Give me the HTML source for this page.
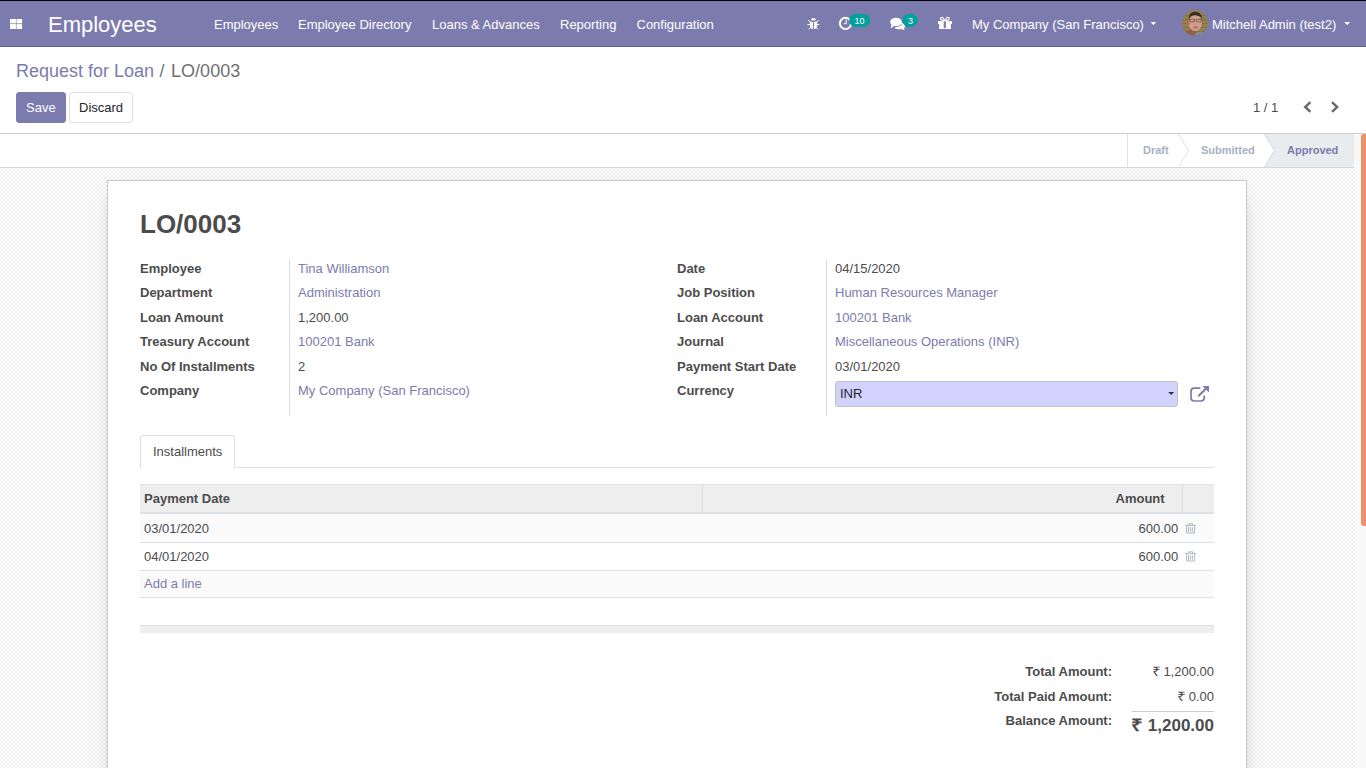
<!DOCTYPE html>
<html><head><meta charset="utf-8">
<style>
*{box-sizing:border-box;margin:0;padding:0}
html,body{width:1366px;height:768px;overflow:hidden;background:#fff}
body{font-family:"Liberation Sans",sans-serif;font-size:13px;line-height:20px;color:#4c4c4c;position:relative}
.a{position:absolute;white-space:nowrap}
a{color:#7c7bad;text-decoration:none}
b{font-weight:bold}
#topline{position:absolute;left:0;top:0;width:1366px;height:1px;background:#000}
#nav{position:absolute;left:0;top:1px;width:1366px;height:46px;background:#7c7bad;border-bottom:1px solid #5f5e97;color:#fff}
#nav .t{position:absolute;white-space:nowrap;line-height:20px;top:14px}
#cp{position:absolute;left:0;top:47px;width:1366px;height:87px;background:#fff;border-bottom:1px solid #ccc}
#bg{position:absolute;left:0;top:134px;width:1354px;height:634px;background:repeating-conic-gradient(#fff 0 25%,#ededed 0 50%) 1px 3px/4px 4px}
#statusbar{position:absolute;left:0;top:134px;width:1354px;height:34px;background:#fff;border-bottom:1px solid #d3d8dd}
#sb-track{position:absolute;left:1354px;top:134px;width:12px;height:634px;background:#f8f8f8}
#sb-thumb{position:absolute;left:1361px;top:134px;width:5px;height:392px;background:#f0906a;border-radius:3px 0 0 3px}
#sheet{position:absolute;left:107px;top:180px;width:1140px;height:620px;background:#fff;border:1px solid #c8c8d3;box-shadow:0 5px 20px -15px #000}
.btn{position:absolute;top:92px;height:31px;border:1px solid transparent;border-radius:3px;line-height:20px;padding:5px 9px 3px;white-space:nowrap}
.sep{position:absolute;width:1px;background:#ddd}
.tr{position:absolute;left:140px;width:1074px}
</style></head>
<body>
<div id="topline"></div>
<div id="nav">
  <svg class="a" style="left:0;top:-1px" width="30" height="46" viewBox="0 0 30 46">
    <rect x="10" y="19" width="5.9" height="4.4" fill="#fff"/><rect x="16.5" y="19" width="5.6" height="4.4" fill="#fff"/>
    <rect x="10" y="24.1" width="5.9" height="4.9" fill="#fff"/><rect x="16.5" y="24.1" width="5.6" height="4.9" fill="#fff"/>
  </svg>
  <div class="t" style="left:48px;top:11px;font-size:22px;line-height:26px">Employees</div>
  <div class="t" style="left:214px">Employees</div>
<svg class="a" style="left:800px;top:-1px" width="380" height="46" viewBox="800 0 380 46">
  <!-- bug -->
  <path d="M810.9,20.2 Q811,17.9 813.4,17.9 Q815.9,17.9 815.9,20.2 Z" fill="#fff"/>
  <path d="M809.9,21.7 H812.9 V29.1 Q809.9,29 809.9,26 Z M813.9,21.7 H817.1 V26 Q817.1,29 813.9,29.1 Z" fill="#fff"/>
  <path d="M808.3,20.1 L810.2,22.3 M818.5,20.1 L816.6,22.3 M807.4,24.6 H810.2 M819.3,24.6 H816.6 M808.6,29.4 L810.3,27.6 M818.2,29.4 L816.5,27.6" stroke="#fff" stroke-width="1" fill="none"/>
  <!-- clock -->
  <circle cx="845.5" cy="23.4" r="5.6" fill="none" stroke="#fff" stroke-width="2"/>
  <path d="M846.2,19.4 V23.7 H843.8" fill="none" stroke="#fff" stroke-width="1"/>
  <rect x="849.2" y="13.8" width="20.8" height="13.2" rx="6.6" fill="#00a09d"/>
  <text x="859.6" y="24" font-family="Liberation Sans" font-size="9" fill="#fff" text-anchor="middle">10</text>
  <!-- chat -->
  <path d="M897.5,22 Q905,22.5 905,26.4 Q905,28 903.6,28.8 Q904.2,29.6 905.4,29.9 Q902.8,30 901.3,29 Q900,29.2 898.6,29.2 Q896.2,29.2 894.8,28.3 Z" fill="#fff"/>
  <path d="M893.8,26.4 Q898.5,27.2 901.6,24.4" fill="none" stroke="#7c7bad" stroke-width="1"/><ellipse cx="896" cy="21.9" rx="5.9" ry="4.1" fill="#fff"/>
  <path d="M891.2,24.2 Q891.5,27 890.6,28.2 Q893,27.6 894.3,25.6 Z" fill="#fff"/>
  <ellipse cx="910.1" cy="20.4" rx="7.9" ry="6.6" fill="#00a09d"/>
  <text x="910.4" y="24" font-family="Liberation Sans" font-size="9" fill="#fff" text-anchor="middle">3</text>
  <!-- gift -->
  <path d="M938,20.9 H951.9 V23.9 H950.9 V28.9 H939.2 V23.9 H938 Z M943.7,21.3 V27.9 H945.9 V21.3 Z" fill="#fff" fill-rule="evenodd"/>
  <path d="M944.4,20.4 Q943.5,17.2 942,17.2 Q940.4,17.3 940.6,18.8 Q941,20.4 944.4,20.4 Z M945.4,20.4 Q946.3,17.2 947.8,17.2 Q949.4,17.3 949.2,18.8 Q948.8,20.4 945.4,20.4 Z" fill="none" stroke="#fff" stroke-width="1.1"/>
  <!-- carets -->
  <polygon points="1150.5,22 1156.3,22 1153.4,25" fill="#fff"/>
</svg>
<svg class="a" style="left:1340px;top:-1px" width="20" height="46" viewBox="1340 0 20 46">
  <polygon points="1344.3,22 1350.1,22 1347.2,25" fill="#fff"/>
</svg>
<svg class="a" style="left:1182px;top:9px" width="26" height="26" viewBox="0 0 26 26">
  <defs><clipPath id="av"><circle cx="13" cy="13" r="12.9"/></clipPath></defs>
  <g clip-path="url(#av)">
    <rect width="26" height="26" fill="#94804e"/>
    <path d="M0,5.5 H26 M0,9.5 H26 M0,13.5 H26 M0,17.5 H26 M0,21.5 H26" stroke="#7e6a42" stroke-width="1" opacity=".7"/>
    <ellipse cx="9" cy="25" rx="8" ry="5" fill="#8c6248"/>
    <ellipse cx="18.5" cy="25.5" rx="6" ry="4" fill="#7c8a94"/>
    <ellipse cx="13.2" cy="13" rx="6.6" ry="8.2" fill="#cf9f8c"/>
    <ellipse cx="6.2" cy="13.2" rx="1.3" ry="2.2" fill="#c06a58"/>
    <path d="M6.6,9 Q6.8,2 13,1.8 Q19.8,1.8 20.2,9.5 Q19.2,5.6 13.4,5.2 Q8.4,5.2 6.6,9 Z" fill="#3a2c24"/>
    <path d="M7.2,9.4 H12.6 V11.8 H7.8 Z M14.2,9.4 H19.6 L19.2,11.8 H14.6 Z" fill="none" stroke="#4a3a34" stroke-width="0.8" opacity=".75"/>
    <ellipse cx="13.6" cy="17.4" rx="2.6" ry="1.1" fill="#b86a6a"/>
  </g>
</svg>

  <div class="t" style="left:298px">Employee Directory</div>
  <div class="t" style="left:432px">Loans &amp; Advances</div>
  <div class="t" style="left:560px">Reporting</div>
  <div class="t" style="left:636.5px">Configuration</div>
  <div class="t" style="left:972px">My Company (San Francisco)</div>
  <div class="t" style="left:1212px">Mitchell Admin (test2)</div>
</div>
<div id="cp">
  <div class="a" style="left:16px;top:12px;font-size:18px;line-height:24px"><a>Request for Loan</a><span style="color:#6c757d;padding:0 6.5px 0 5.5px">/</span><span style="color:#707070">LO/0003</span></div>
</div>
<div class="btn" style="left:16px;width:50px;background:#7c7bad;border-color:#7c7bad;color:#fff">Save</div>
<div class="btn" style="left:69px;width:64px;background:#fff;border-color:#dee2e6;color:#212529">Discard</div>
<div class="a" style="left:1253px;top:98px">1 / 1</div>
<svg class="a" style="left:1298px;top:96px" width="46" height="22" viewBox="0 0 46 22">
  <polyline points="12.4,6.2 7.2,11 12.4,15.8" fill="none" stroke="#6a6a6a" stroke-width="2.4"/>
  <polyline points="34,6.2 39.2,11 34,15.8" fill="none" stroke="#6a6a6a" stroke-width="2.4"/>
</svg>


<div id="bg"></div>
<div id="statusbar"></div>
<svg class="a" style="left:0;top:134px" width="1354" height="33" viewBox="0 0 1354 33">
  <polygon points="1264,0 1354,0 1354,33 1264,33 1274.5,16.5" fill="#e9ecef"/>
  <line x1="1127.5" y1="0" x2="1127.5" y2="33" stroke="#dee2e6" stroke-width="1"/>
  <polyline points="1178.5,0 1188.5,16.5 1178.5,33" fill="none" stroke="#dee2e6" stroke-width="1"/>
  <polyline points="1264.5,0 1274.5,16.5 1264.5,33" fill="none" stroke="#d5d9de" stroke-width="1"/>
</svg>
<div class="a" style="left:1143px;top:140px;font-size:11px;font-weight:bold;color:#a8b0c4">Draft</div>
<div class="a" style="left:1201px;top:140px;font-size:11px;font-weight:bold;color:#a8b0c4">Submitted</div>
<div class="a" style="left:1287px;top:140px;font-size:11px;font-weight:bold;color:#7c7bad">Approved</div>

<div id="sheet"></div>


<div class="a" style="left:140px;top:209px;font-size:26px;line-height:30px;font-weight:bold">LO/0003</div>

<div class="a" style="left:140px;top:259px"><b>Employee</b></div>
<div class="a" style="left:140px;top:283px"><b>Department</b></div>
<div class="a" style="left:140px;top:308px"><b>Loan Amount</b></div>
<div class="a" style="left:140px;top:332px"><b>Treasury Account</b></div>
<div class="a" style="left:140px;top:357px"><b>No Of Installments</b></div>
<div class="a" style="left:140px;top:381px"><b>Company</b></div>
<div class="sep" style="left:289px;top:259px;height:157px"></div>
<div class="a" style="left:298px;top:259px"><a>Tina Williamson</a></div>
<div class="a" style="left:298px;top:283px"><a>Administration</a></div>
<div class="a" style="left:298px;top:308px">1,200.00</div>
<div class="a" style="left:298px;top:332px"><a>100201 Bank</a></div>
<div class="a" style="left:298px;top:357px">2</div>
<div class="a" style="left:298px;top:381px"><a>My Company (San Francisco)</a></div>

<div class="a" style="left:677px;top:259px"><b>Date</b></div>
<div class="a" style="left:677px;top:283px"><b>Job Position</b></div>
<div class="a" style="left:677px;top:308px"><b>Loan Account</b></div>
<div class="a" style="left:677px;top:332px"><b>Journal</b></div>
<div class="a" style="left:677px;top:357px"><b>Payment Start Date</b></div>
<div class="a" style="left:677px;top:381px"><b>Currency</b></div>
<div class="sep" style="left:826px;top:259px;height:157px"></div>
<div class="a" style="left:835px;top:259px">04/15/2020</div>
<div class="a" style="left:835px;top:283px"><a>Human Resources Manager</a></div>
<div class="a" style="left:835px;top:308px"><a>100201 Bank</a></div>
<div class="a" style="left:835px;top:332px"><a>Miscellaneous Operations (INR)</a></div>
<div class="a" style="left:835px;top:357px">03/01/2020</div>
<div class="a" style="left:835px;top:381px;width:343px;height:26px;background:#d2d2ff;border:1px solid #c0c0c0;border-radius:3px;padding:2px 4px;line-height:20px;color:#212529">INR</div>

<svg class="a" style="left:1160px;top:380px" width="60" height="28" viewBox="0 0 60 28">
  <polygon points="8.2,12 14.2,12 11.2,15" fill="#333"/>
  <path d="M40.3,8.2 H34.2 Q31,8.2 31,11.4 V17.8 Q31,21 34.2,21 H41 Q44.2,21 44.2,17.8 V15.6" fill="none" stroke="#7c7bad" stroke-width="1.7"/>
  <path d="M38.3,16.3 L45.6,9" fill="none" stroke="#7c7bad" stroke-width="2"/>
  <polygon points="42.4,5.9 49,5.9 49,12.5" fill="#7c7bad"/>
</svg>
<!-- tabs -->
<div class="a" style="left:140px;top:467px;width:1074px;height:1px;background:#dee2e6"></div>
<div class="a" style="left:140px;top:435px;width:95px;height:33px;background:#fff;border:1px solid #dee2e6;border-bottom:0;border-radius:3px 3px 0 0;padding:6px 12px;line-height:20px">Installments</div>

<!-- table -->
<div class="tr" style="top:484px;height:30px;background:#eee;border-top:1px solid #dee2e6;border-bottom:2px solid #dee2e6"></div>
<div class="sep" style="left:702px;top:485px;height:27px;background:#dcdcdc"></div>
<div class="sep" style="left:1182px;top:485px;height:27px;background:#dcdcdc"></div>
<div class="a" style="left:144px;top:489px"><b>Payment Date</b></div>
<div class="a" style="left:1115.5px;top:489px"><b>Amount</b></div>
<div class="tr" style="top:514px;height:29px;background:#fafafa;border-bottom:1px solid #dee2e6"></div>
<div class="tr" style="top:543px;height:28px;background:#fff;border-bottom:1px solid #dee2e6"></div>
<div class="tr" style="top:571px;height:27px;background:#fafafa;border-bottom:1px solid #dee2e6"></div>
<div class="tr" style="top:625px;height:8px;background:#eee;border-top:1px solid #dee2e6"></div>
<div class="a" style="left:144px;top:519px">03/01/2020</div>
<div class="a" style="left:1138.5px;top:519px">600.00</div>
<div class="a" style="left:144px;top:547px">04/01/2020</div>
<div class="a" style="left:1138.5px;top:547px">600.00</div>
<div class="a" style="left:144px;top:574px"><a>Add a line</a></div>
<svg class="a" style="left:1184px;top:522px" width="13" height="13" viewBox="0 0 13 13">
  <path d="M1.2,3.4 H11.8 M4.9,3.3 V1.8 H8.5 V3.3 M2.6,3.4 V11 H10.6 V3.4 M4.5,5.2 V9.8 M6.4,5.2 V9.8 M8.4,5.2 V9.8" fill="none" stroke="#aab0b8" stroke-width="0.9"/>
</svg>
<svg class="a" style="left:1184px;top:550px" width="13" height="13" viewBox="0 0 13 13">
  <path d="M1.2,3.4 H11.8 M4.9,3.3 V1.8 H8.5 V3.3 M2.6,3.4 V11 H10.6 V3.4 M4.5,5.2 V9.8 M6.4,5.2 V9.8 M8.4,5.2 V9.8" fill="none" stroke="#aab0b8" stroke-width="0.9"/>
</svg>


<!-- totals -->
<div class="a" style="left:900px;top:662px;width:212px;text-align:right"><b>Total Amount:</b></div>
<div class="a" style="left:900px;top:687px;width:212px;text-align:right"><b>Total Paid Amount:</b></div>
<div class="a" style="left:900px;top:711px;width:212px;text-align:right"><b>Balance Amount:</b></div>
<div class="a" style="left:1114px;top:662px;width:100px;text-align:right"><span style="display:inline-block;transform:scaleX(1.2);transform-origin:100% 50%">₹</span> 1,200.00</div>
<div class="a" style="left:1114px;top:687px;width:100px;text-align:right"><span style="display:inline-block;transform:scaleX(1.2);transform-origin:100% 50%">₹</span> 0.00</div>
<div class="a" style="left:1132px;top:711px;width:82px;height:1px;background:#ccc"></div>
<div class="a" style="left:1100px;top:714px;width:114px;text-align:right;font-size:17px;line-height:24px;font-weight:bold"><span style="display:inline-block;transform:scaleX(1.2);transform-origin:100% 50%">₹</span> 1,200.00</div>

<div id="sb-track"></div>
<div id="sb-thumb"></div>
</body></html>
